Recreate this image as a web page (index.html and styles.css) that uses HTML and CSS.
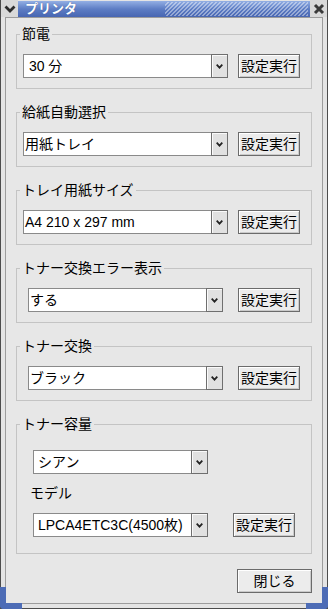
FILE: index.html
```html
<!DOCTYPE html>
<html lang="ja">
<head>
  <meta charset="UTF-8">
  <meta name="viewport" content="width=device-width, initial-scale=1.0">
  <title>プリンタ</title>
  <link rel="stylesheet" href="styles.css">
</head>
<body>
<div class="window">
  <div class="titlebar">
    <span class="tb-btn">
      <svg width="12" height="8" viewBox="0 0 12 8"><path d="M1.5 1.5 L6 6 L10.5 1.5" fill="none" stroke="#2c2c2c" stroke-width="2.8"/></svg>
    </span>
    <span class="tb-title">プリンタ<span class="stripes"></span></span>
    <span class="tb-btn">
      <svg width="12" height="12" viewBox="0 0 12 12"><path d="M2 2 L10 10 M10 2 L2 10" fill="none" stroke="#3a3a3a" stroke-width="3"/></svg>
    </span>
  </div>

  <div class="client">
    <fieldset class="group">
      <legend>節電</legend>
      <div class="row row-a">
        <div class="combo"><span class="entry">&nbsp;30 分</span><span class="arrow"><svg width="7" height="5" viewBox="0 0 7 5"><path d="M0.7 0.7 L3.5 3.6 L6.3 0.7" fill="none" stroke="#222" stroke-width="1.8"/></svg></span></div>
        <button class="btn">設定実行</button>
      </div>
    </fieldset>

    <fieldset class="group">
      <legend>給紙自動選択</legend>
      <div class="row row-a">
        <div class="combo"><span class="entry">用紙トレイ</span><span class="arrow"><svg width="7" height="5" viewBox="0 0 7 5"><path d="M0.7 0.7 L3.5 3.6 L6.3 0.7" fill="none" stroke="#222" stroke-width="1.8"/></svg></span></div>
        <button class="btn">設定実行</button>
      </div>
    </fieldset>

    <fieldset class="group">
      <legend>トレイ用紙サイズ</legend>
      <div class="row row-a">
        <div class="combo"><span class="entry">A4 210 x 297 mm</span><span class="arrow"><svg width="7" height="5" viewBox="0 0 7 5"><path d="M0.7 0.7 L3.5 3.6 L6.3 0.7" fill="none" stroke="#222" stroke-width="1.8"/></svg></span></div>
        <button class="btn">設定実行</button>
      </div>
    </fieldset>

    <fieldset class="group">
      <legend>トナー交換エラー表示</legend>
      <div class="row row-b">
        <div class="combo"><span class="entry">する</span><span class="arrow"><svg width="7" height="5" viewBox="0 0 7 5"><path d="M0.7 0.7 L3.5 3.6 L6.3 0.7" fill="none" stroke="#222" stroke-width="1.8"/></svg></span></div>
        <button class="btn">設定実行</button>
      </div>
    </fieldset>

    <fieldset class="group">
      <legend>トナー交換</legend>
      <div class="row row-b">
        <div class="combo"><span class="entry">ブラック</span><span class="arrow"><svg width="7" height="5" viewBox="0 0 7 5"><path d="M0.7 0.7 L3.5 3.6 L6.3 0.7" fill="none" stroke="#222" stroke-width="1.8"/></svg></span></div>
        <button class="btn">設定実行</button>
      </div>
    </fieldset>

    <fieldset class="group toner">
      <legend>トナー容量</legend>
      <div class="row row-c first">
        <div class="combo"><span class="entry">シアン</span><span class="arrow"><svg width="7" height="5" viewBox="0 0 7 5"><path d="M0.7 0.7 L3.5 3.6 L6.3 0.7" fill="none" stroke="#222" stroke-width="1.8"/></svg></span></div>
      </div>
      <div class="sub-label">モデル</div>
      <div class="row row-c">
        <div class="combo"><span class="entry">LPCA4ETC3C(4500枚)</span><span class="arrow"><svg width="7" height="5" viewBox="0 0 7 5"><path d="M0.7 0.7 L3.5 3.6 L6.3 0.7" fill="none" stroke="#222" stroke-width="1.8"/></svg></span></div>
        <button class="btn">設定実行</button>
      </div>
    </fieldset>

    <div class="footer">
      <button class="btn btn-close">閉じる</button>
    </div>
  </div>

  <span class="grip grip-left"></span>
  <span class="grip grip-right"></span>
</div>
</body>
</html>
```

FILE: styles.css
```css
body {
  margin: 0;
  font-family: "Liberation Sans", "Noto Sans CJK JP", sans-serif;
  font-size: 14px;
  color: #000;
  background: #fff;
}

.window {
  position: relative;
  width: 328px;
  height: 609px;
  box-sizing: border-box;
  border: 1px solid #4c4c4c;
  border-top: 0;
  background: #e4e4e4;
  display: flex;
  flex-direction: column;
}

/* title bar */
.titlebar {
  display: flex;
  height: 17px;
}

.tb-btn {
  width: 17px;
  display: flex;
  align-items: center;
  justify-content: center;
  background: #d9d9d9;
}

.tb-title {
  flex: 1;
  display: flex;
  align-items: center;
  margin: 1px 0 0;
  padding-left: 7px;
  background: linear-gradient(#93afe4, #5d7dc4 50%, #4866b2);
  color: #fff;
  font-weight: bold;
  font-size: 13px;
  line-height: 16px;
  text-shadow: 0 0 1px #2b4a8c;
}

.stripes {
  flex: 1;
  align-self: stretch;
  margin: 1px 2px 1px 88px;
  background: repeating-linear-gradient(135deg, transparent 0 1.7px, rgba(255, 255, 255, 0.4) 1.7px 2.83px);
}

/* client area */
.client {
  flex: 1;
  margin: 0 4px 4px;
  border: 1px solid #9c9c9c;
  background: #e7e7e7;
  padding-top: 8px;
}

.group {
  margin: 0 10px 15px;
  padding: 12px 0 10px;
  border: 1px solid #c4c4c4;
  min-width: 0;
}

.group legend {
  margin-left: 3px;
  padding: 0 2px;
  line-height: 16px;
}

.row {
  display: flex;
  align-items: center;
}

.combo {
  display: flex;
  height: 24px;
}

.entry {
  flex: 1;
  min-width: 0;
  background: #fff;
  border: 1px solid #8a8a8a;
  border-right: 0;
  padding-left: 1px;
  line-height: 22px;
  white-space: nowrap;
  overflow: hidden;
}

.arrow {
  width: 15px;
  border: 1px solid #6f6f6f;
  background: #e1e1e1;
  box-shadow: inset 1px 1px 0 #fafafa;
  display: flex;
  align-items: center;
  justify-content: center;
}

.btn {
  box-sizing: border-box;
  width: 62px;
  height: 24px;
  padding: 0;
  border: 1px solid #6b6b6b;
  background: #ececec;
  box-shadow: inset 1px 1px 0 #fff, inset -1px -1px 0 #cacaca;
  font: inherit;
  line-height: 22px;
  color: #000;
}

.row-a .combo { margin-left: 6px; width: 205px; }
.row-a .btn { margin-left: 10px; }

.row-b .combo { margin-left: 11px; width: 195px; }
.row-b .btn { margin-left: 15px; }

.row-c .combo { margin-left: 16px; width: 175px; }
.row-c .entry { padding-left: 4px; }
.row-c .btn { margin-left: 25px; }

.toner {
  padding-bottom: 16px;
}

.toner .first {
  margin-top: 6px;
}

.sub-label {
  margin: 11px 0 12px 13px;
  line-height: 16px;
}

.footer {
  display: flex;
  justify-content: flex-end;
  margin: 0 10px;
}

.btn-close {
  width: 75px;
}

/* resize grips in the bottom corners of the frame */
.grip {
  position: absolute;
  bottom: -1px;
  width: 22px;
  height: 22px;
  box-sizing: border-box;
  border-bottom: 6px solid #4d6cb6;
}

.grip-left {
  left: -1px;
  border-left: 6px solid #4d6cb6;
  border-bottom-left-radius: 4px;
}

.grip-right {
  right: -1px;
  border-right: 6px solid #4d6cb6;
  border-bottom-right-radius: 4px;
}
```
